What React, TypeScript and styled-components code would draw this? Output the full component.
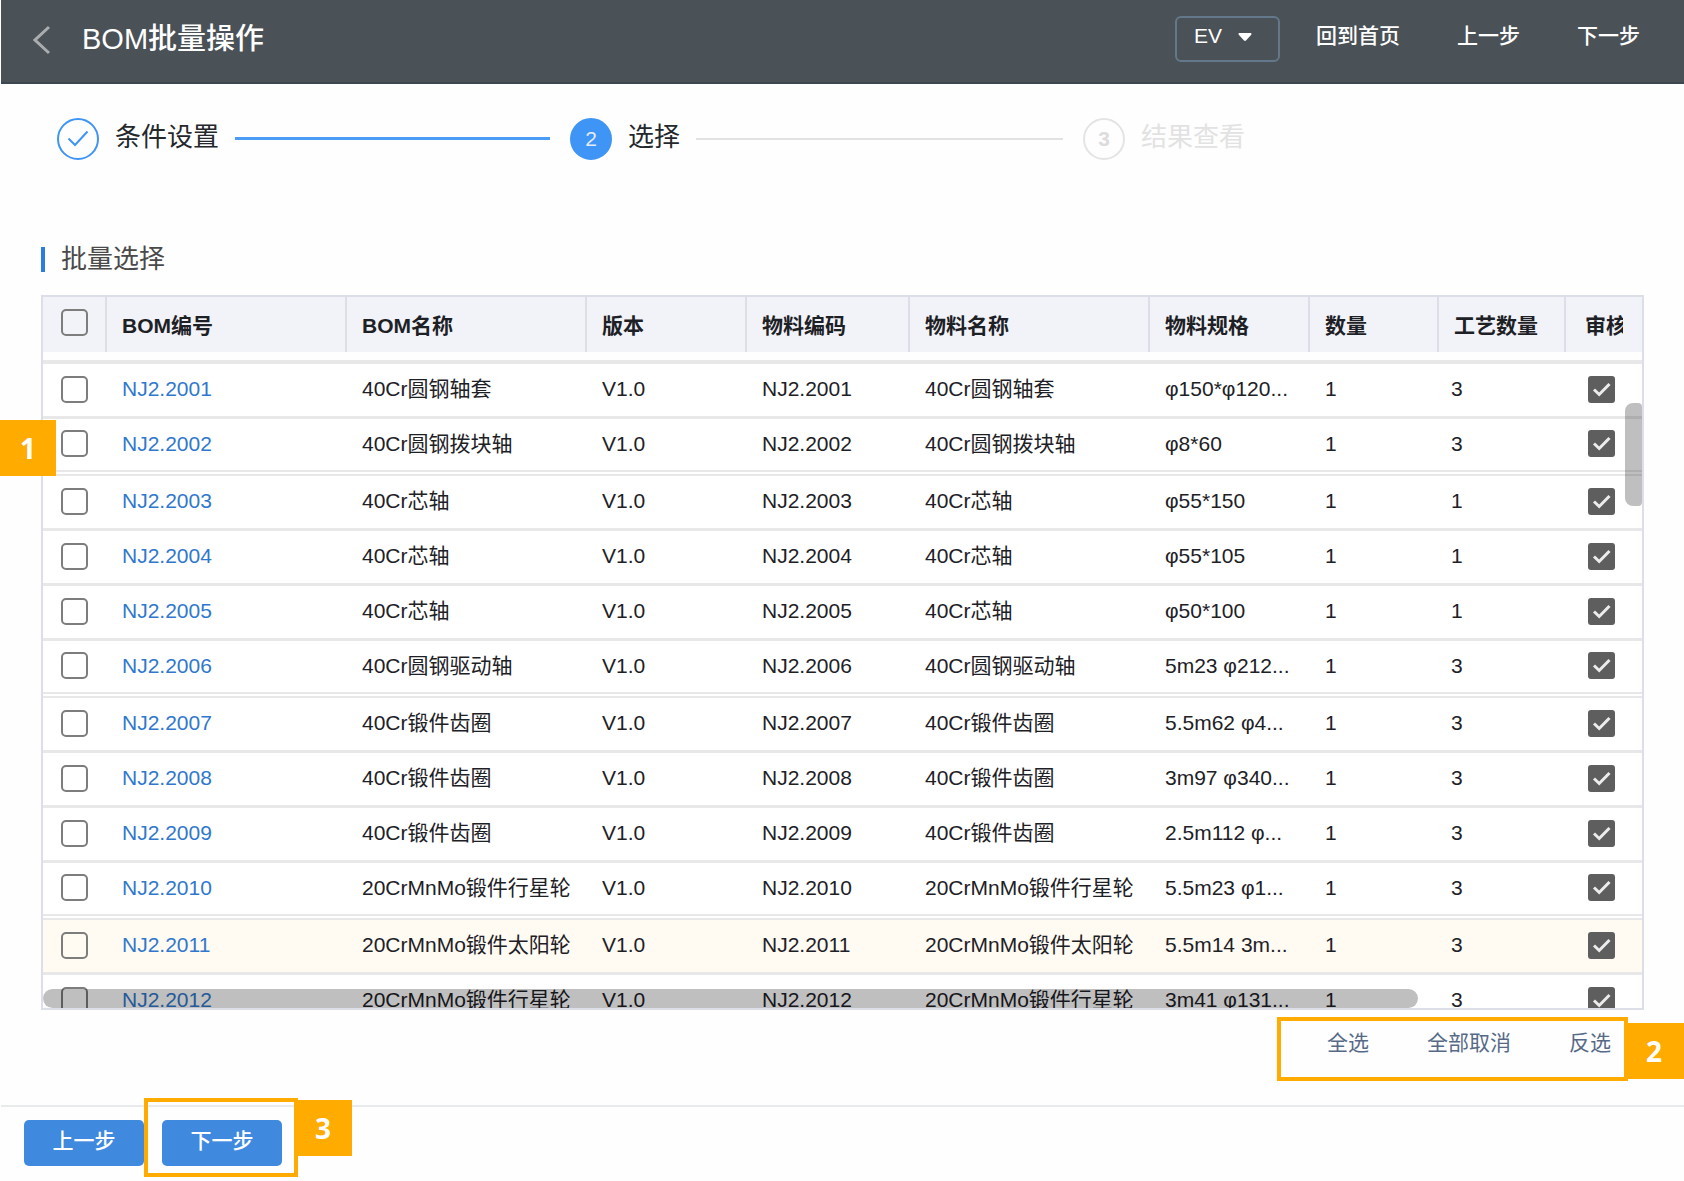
import React, { useState } from "react";
import styled, { createGlobalStyle } from "styled-components";

const GlobalStyle = createGlobalStyle`
  *, *::before, *::after { box-sizing: border-box; }
  body {
    margin: 0;
    background: #fefefe;
    color: #1d2126;
    font-family: "Liberation Sans", "Noto Sans CJK SC", sans-serif;
    font-size: 21px;
    line-height: 30px;
  }
  button, select { font: inherit; color: inherit; }
`;

const Header = styled.header`
  display: flex;
  align-items: center;
  justify-content: space-between;
  height: 84px;
  padding: 0 44px 4px 32px;
  margin-left: 1px;
  background: #4a5157;
  border-bottom: 2px solid #3d474f;
  color: #ffffff;
`;

const HeaderGroup = styled.div<{ $gap: number }>`
  display: flex;
  align-items: center;
  gap: ${(p) => p.$gap}px;
`;

const PlainButton = styled.button`
  padding: 0;
  border: 0;
  background: none;
  cursor: pointer;
`;

const BackButton = styled(PlainButton)`
  display: flex;
  padding-top: 2px;
  color: #a9adb0;
`;

const Title = styled.h1`
  margin: 0;
  font-size: 29px;
  line-height: 40px;
  font-weight: 500;
`;

const VersionPicker = styled.label`
  display: grid;
  align-items: center;
  width: 105px;
  margin-right: 36px;
  & > * { grid-area: 1 / 1; }
  svg {
    justify-self: end;
    margin: 0 28px 4px 0;
    pointer-events: none;
  }
`;

const VersionSelect = styled.select`
  appearance: none;
  width: 100%;
  height: 46px;
  padding: 0 44px 6px 17px;
  border: 2px solid #63788a;
  border-radius: 6px;
  background: transparent;
  font-weight: 500;
  option { color: #1d2126; }
`;

const NavButton = styled(PlainButton)`
  padding-bottom: 6px;
  font-weight: 500;
`;

const Steps = styled.ol`
  display: grid;
  grid-template-columns: repeat(3, 1fr);
  margin: 33px 88px 0 57px;
  padding: 0;
  list-style: none;
`;

type StepState = "done" | "current" | "pending";

const Step = styled.li<{ $state: StepState }>`
  display: flex;
  align-items: center;
  gap: 16px;
  padding-right: 20px;
  font-size: 26px;
  line-height: 40px;
  color: ${(p) => (p.$state === "pending" ? "#e2e2e2" : "#24282c")};
`;

const StepMark = styled.span<{ $state: StepState }>`
  display: grid;
  place-items: center;
  width: 42px;
  height: 42px;
  border: 2px solid ${(p) => (p.$state === "pending" ? "#e4e4e4" : "#3f95f5")};
  border-radius: 50%;
  background: ${(p) => (p.$state === "current" ? "#3f95f5" : "transparent")};
  color: ${(p) => (p.$state === "pending" ? "#dcdcdc" : p.$state === "current" ? "#e4ecf5" : "#3f95f5")};
  font-size: 21px;
  line-height: 30px;
  font-weight: ${(p) => (p.$state === "pending" ? 700 : 400)};
`;

const StepLabel = styled.span`
  padding-bottom: 3px;
`;

const StepLine = styled.span<{ $active: boolean }>`
  flex: 1;
  height: ${(p) => (p.$active ? 3 : 2)}px;
  background: ${(p) => (p.$active ? "#4a9cf6" : "#e2e2e2")};
`;

const Section = styled.section`
  padding: 0 40px 0 41px;
`;

const SectionTitle = styled.h2`
  display: flex;
  align-items: center;
  gap: 16px;
  margin: 79px 0 16px;
  font-size: 26px;
  line-height: 40px;
  font-weight: 400;
  color: #4a4a4a;
  &::before {
    content: "";
    width: 4px;
    height: 25px;
    background: #2b7de0;
  }
`;

const TableArea = styled.div`
  position: relative;
`;

const Viewport = styled.div`
  position: relative;
  height: 715px;
  overflow: hidden;
  border: 2px solid #dcdfe8;
`;

const Table = styled.table`
  width: 100%;
  table-layout: fixed;
  border-collapse: separate;
  border-spacing: 0;
`;

const HeadCell = styled.th<{ $pad?: number; $mark?: boolean }>`
  height: 55px;
  padding: ${(p) => (p.$mark ? "0 0 5px" : "3px 0 0")};
  padding-left: ${(p) => p.$pad ?? 15}px;
  background: #f2f3f8;
  border-right: 2px solid #dcdfe8;
  text-align: left;
  font-weight: 700;
  white-space: nowrap;
  &:last-child {
    padding-right: 19px;
    border-right: 0;
  }
`;

const HeadText = styled.span`
  display: block;
  overflow: hidden;
`;

const HeadGap = styled.td`
  height: 12px;
  padding: 0;
  border-bottom: 4px solid #e8e8e8;
`;

const Row = styled.tr<{ $split: boolean; $hover: boolean }>`
  background: ${(p) => (p.$hover ? "#fffaf2" : "#ffffff")};
  & > td {
    height: ${(p) => (p.$split ? 57 : 55)}px;
    border-bottom: ${(p) => (p.$split ? "6px double" : "3px solid")} #e8e8e8;
  }
`;

const Cell = styled.td<{ $pad?: number }>`
  padding: 0 0 2px ${(p) => p.$pad ?? 15}px;
  white-space: nowrap;
  overflow: hidden;
`;

const CodeLink = styled.a`
  color: #2f78cd;
  text-decoration: none;
`;

const CheckWrap = styled.label`
  display: grid;
  place-items: center;
  width: 27px;
  height: 27px;
  & > * { grid-area: 1 / 1; }
  svg { pointer-events: none; }
`;

const CheckInput = styled.input`
  appearance: none;
  width: 27px;
  height: 27px;
  margin: 0;
  border: 2px solid #7d7d7d;
  border-radius: 5px;
  &:checked {
    background: #5e5e5e;
    border-color: #5e5e5e;
    border-radius: 3px;
  }
`;

const VerticalThumb = styled.div`
  position: absolute;
  top: 106px;
  right: 0;
  width: 17px;
  height: 103px;
  border-radius: 8px 4px 4px 8px;
  background: rgba(0, 0, 0, 0.25);
`;

const HorizontalThumb = styled.div`
  position: absolute;
  left: 0;
  bottom: 0;
  width: 86%;
  height: 19px;
  border-radius: 10px;
  background: rgba(0, 0, 0, 0.25);
`;

const Actions = styled.div`
  position: relative;
  display: flex;
  align-items: center;
  gap: 58px;
  width: fit-content;
  height: 64px;
  margin: 7px 16px 0 auto;
  padding: 0 17px 12px 50px;
  color: #566a88;
`;

const Footer = styled.footer`
  display: flex;
  gap: 18px;
  margin: 24px 0 0 1px;
  padding: 13px 23px 15px;
  border-top: 2px solid #e9eaec;
`;

const FooterItem = styled.div`
  position: relative;
`;

const PrimaryButton = styled.button`
  width: 120px;
  height: 46px;
  padding: 0 0 4px;
  border: 0;
  border-radius: 5px;
  background: #3f89de;
  color: #ffffff;
  font-weight: 500;
  cursor: pointer;
`;

const Frame = styled.span<{ $inset: string }>`
  position: absolute;
  inset: ${(p) => p.$inset};
  border: 4px solid #ffab00;
  pointer-events: none;
`;

const Badge = styled.span<{ $top: string; $left: string; $width: number }>`
  position: absolute;
  top: ${(p) => p.$top};
  left: ${(p) => p.$left};
  display: grid;
  place-items: center;
  width: ${(p) => p.$width}px;
  height: 56px;
  background: #ffab00;
  color: #ffffff;
  font-family: "Open Sans", "Noto Sans", sans-serif;
  font-size: 28px;
  font-weight: 700;
`;

function Check({ label, ...rest }: { label: string } & React.InputHTMLAttributes<HTMLInputElement>) {
  return (
    <CheckWrap>
      <CheckInput type="checkbox" aria-label={label} {...rest} />
      {rest.checked && (
        <svg width="27" height="27" viewBox="0 0 27 27" fill="none" stroke="#ececec" strokeWidth="3">
          <path d="M6 13.5l5.2 5L21.500 8" />
        </svg>
      )}
    </CheckWrap>
  );
}

interface Bom {
  code: string;
  name: string;
  spec: string;
  process: number;
}

const boms: Bom[] = [
  { code: "NJ2.2001", name: "40Cr圆钢轴套", spec: "φ150*φ120...", process: 3 },
  { code: "NJ2.2002", name: "40Cr圆钢拨块轴", spec: "φ8*60", process: 3 },
  { code: "NJ2.2003", name: "40Cr芯轴", spec: "φ55*150", process: 1 },
  { code: "NJ2.2004", name: "40Cr芯轴", spec: "φ55*105", process: 1 },
  { code: "NJ2.2005", name: "40Cr芯轴", spec: "φ50*100", process: 1 },
  { code: "NJ2.2006", name: "40Cr圆钢驱动轴", spec: "5m23 φ212...", process: 3 },
  { code: "NJ2.2007", name: "40Cr锻件齿圈", spec: "5.5m62 φ4...", process: 3 },
  { code: "NJ2.2008", name: "40Cr锻件齿圈", spec: "3m97 φ340...", process: 3 },
  { code: "NJ2.2009", name: "40Cr锻件齿圈", spec: "2.5m112 φ...", process: 3 },
  { code: "NJ2.2010", name: "20CrMnMo锻件行星轮", spec: "5.5m23 φ1...", process: 3 },
  { code: "NJ2.2011", name: "20CrMnMo锻件太阳轮", spec: "5.5m14 3m...", process: 3 },
  { code: "NJ2.2012", name: "20CrMnMo锻件行星轮", spec: "3m41 φ131...", process: 3 },
];

const columnWidths = [64, 240, 240, 160, 163, 240, 160, 129, 127, 76];
const headings = ["BOM编号", "BOM名称", "版本", "物料编码", "物料名称", "物料规格", "数量", "工艺数量"];

export default function App() {
  const [selected, setSelected] = useState<string[]>([]);
  const all = boms.map((b) => b.code);
  const toggle = (code: string) =>
    setSelected((s) => (s.includes(code) ? s.filter((c) => c !== code) : [...s, code]));

  return (
    <>
      <GlobalStyle />
      <Header>
        <HeaderGroup $gap={31}>
          <BackButton type="button" aria-label="返回">
            <svg width="18" height="30" viewBox="0 0 18 30" fill="none" stroke="currentColor" strokeWidth="3">
              <path d="M16 2L2 15l14 13" />
            </svg>
          </BackButton>
          <Title>BOM批量操作</Title>
        </HeaderGroup>
        <HeaderGroup as="nav" $gap={57}>
          <HeaderGroup $gap={0}>
            <VersionPicker>
              <VersionSelect aria-label="版本类型" defaultValue="EV">
                <option>EV</option>
              </VersionSelect>
              <svg width="14" height="8" viewBox="0 0 14 8" fill="#ffffff">
                <path d="M1 0h12q1 1 0 2L8 7.500q-1 .8-2 0L1 2q-1-1 0-2z" />
              </svg>
            </VersionPicker>
            <NavButton type="button">回到首页</NavButton>
          </HeaderGroup>
          <NavButton type="button">上一步</NavButton>
          <NavButton type="button">下一步</NavButton>
        </HeaderGroup>
      </Header>

      <main>
        <Steps>
          <Step $state="done">
            <StepMark $state="done">
              <svg width="22" height="20" viewBox="0 0 22 20" fill="none" stroke="currentColor" strokeWidth="2">
                <path d="M1.500 9.500L8 16 20.500 2.500" />
              </svg>
            </StepMark>
            <StepLabel>条件设置</StepLabel>
            <StepLine $active />
          </Step>
          <Step $state="current" aria-current="step">
            <StepMark $state="current">2</StepMark>
            <StepLabel>选择</StepLabel>
            <StepLine $active={false} />
          </Step>
          <Step $state="pending">
            <StepMark $state="pending">3</StepMark>
            <StepLabel>结果查看</StepLabel>
          </Step>
        </Steps>

        <Section>
          <SectionTitle>批量选择</SectionTitle>
          <TableArea>
            <Viewport>
              <Table>
                <colgroup>
                  {columnWidths.map((w, i) => (
                    <col key={i} style={{ width: w }} />
                  ))}
                </colgroup>
                <thead>
                  <tr>
                    <HeadCell $pad={18} $mark>
                      <Check
                        label="选择全部"
                        checked={selected.length === all.length}
                        onChange={(e) => setSelected(e.target.checked ? all : [])}
                      />
                    </HeadCell>
                    {headings.map((h) => (
                      <HeadCell key={h}>{h}</HeadCell>
                    ))}
                    <HeadCell $pad={19}>
                      <HeadText>审核</HeadText>
                    </HeadCell>
                  </tr>
                </thead>
                <tbody>
                  <tr aria-hidden="true">
                    <HeadGap colSpan={10} />
                  </tr>
                  {boms.map((b, i) => (
                    <Row key={b.code} $split={i % 4 === 1} $hover={b.code === "NJ2.2011"}>
                      <Cell $pad={18}>
                        <Check
                          label={"选择 " + b.code}
                          checked={selected.includes(b.code)}
                          onChange={() => toggle(b.code)}
                        />
                      </Cell>
                      <Cell>
                        <CodeLink href={"#" + b.code}>{b.code}</CodeLink>
                      </Cell>
                      <Cell>{b.name}</Cell>
                      <Cell>V1.0</Cell>
                      <Cell>{b.code}</Cell>
                      <Cell>{b.name}</Cell>
                      <Cell>{b.spec}</Cell>
                      <Cell>1</Cell>
                      <Cell $pad={12}>{b.process}</Cell>
                      <Cell $pad={22}>
                        <Check label={"审核 " + b.code} checked readOnly />
                      </Cell>
                    </Row>
                  ))}
                </tbody>
              </Table>
              <VerticalThumb />
              <HorizontalThumb />
            </Viewport>
            <Badge $top="125px" $left="-41px" $width={56}>1</Badge>
          </TableArea>
          <Actions>
            <PlainButton type="button" onClick={() => setSelected(all)}>全选</PlainButton>
            <PlainButton type="button" onClick={() => setSelected([])}>全部取消</PlainButton>
            <PlainButton
              type="button"
              onClick={() => setSelected(all.filter((c) => !selected.includes(c)))}
            >
              反选
            </PlainButton>
            <Frame $inset="0" />
            <Badge $top="6px" $left="calc(100% - 4px)" $width={60}>2</Badge>
          </Actions>
        </Section>
      </main>

      <Footer>
        <PrimaryButton type="button">上一步</PrimaryButton>
        <FooterItem>
          <PrimaryButton type="button">下一步</PrimaryButton>
          <Frame $inset="-22px -16px -11px -18px" />
          <Badge $top="-20px" $left="calc(100% + 12px)" $width={58}>3</Badge>
        </FooterItem>
      </Footer>
    </>
  );
}
